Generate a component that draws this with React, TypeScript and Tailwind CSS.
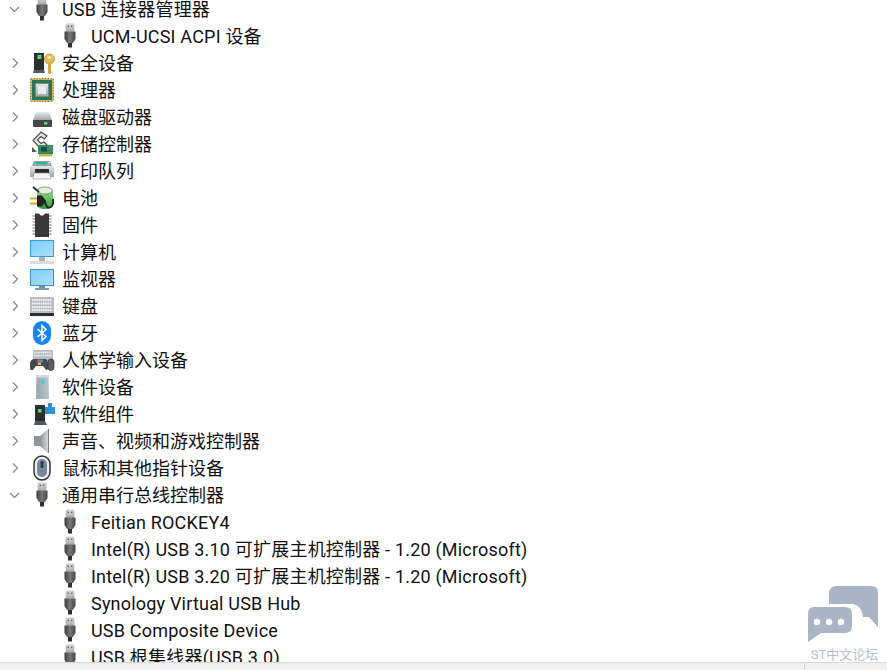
const font = "font-['Roboto','Noto_Sans_CJK_SC',sans-serif]";

function Chevron({ open }: { open?: boolean }) {
  return (
    <svg width="12" height="12" viewBox="0 0 12 12" fill="none" stroke="#808080" strokeWidth="1.1">
      {open ? <path d="M1 4 L5.5 8.5 L10 4" /> : <path d="M4 1.5 L8.5 6 L4 10.5" />}
    </svg>
  );
}

// shared gradients, drawn once at the top of the page
function Defs() {
  return (
    <svg width="0" height="0" className="absolute">
      <defs>
        <linearGradient id="plug" x1="0" x2="1" y1="0" y2="0">
          <stop offset="0" stopColor="#3d3d3d" />
          <stop offset="0.5" stopColor="#787878" />
          <stop offset="1" stopColor="#454545" />
        </linearGradient>
        <linearGradient id="metal" x1="0" x2="0" y1="0" y2="1">
          <stop offset="0" stopColor="#e6e8ea" />
          <stop offset="1" stopColor="#a2a6aa" />
        </linearGradient>
        <linearGradient id="screen" x1="0" x2="1" y1="0" y2="1">
          <stop offset="0" stopColor="#7fcdf8" />
          <stop offset="1" stopColor="#a9e0fc" />
        </linearGradient>
        <linearGradient id="tower" x1="0" x2="1" y1="0" y2="0">
          <stop offset="0" stopColor="#9aa6ae" />
          <stop offset="1" stopColor="#b9c4cb" />
        </linearGradient>
        <linearGradient id="cone" x1="0" x2="1" y1="0" y2="0">
          <stop offset="0" stopColor="#8d9297" />
          <stop offset="1" stopColor="#d5d8da" />
        </linearGradient>
        <linearGradient id="jar" x1="0" x2="0" y1="0" y2="1">
          <stop offset="0" stopColor="#8fd67c" />
          <stop offset="1" stopColor="#2f9c3c" />
        </linearGradient>
      </defs>
    </svg>
  );
}

function Usb() {
  return (
    <svg width="26" height="26" viewBox="0 0 26 26">
      <rect x="9" y="1" width="8" height="7.5" rx="1" fill="url(#metal)" stroke="#9a9a9a" strokeWidth="0.5" />
      <rect x="10.5" y="2.5" width="1.6" height="1.6" fill="#666" />
      <rect x="13.9" y="2.5" width="1.6" height="1.6" fill="#666" />
      <path d="M7.5 8.5 H18.5 V16 L16 20 H10 L7.5 16 Z" fill="url(#plug)" />
      <rect x="11" y="20" width="4" height="4.5" fill="#2f2f2f" />
    </svg>
  );
}

function Security() {
  return (
    <svg width="26" height="26" viewBox="0 0 26 26">
      <rect x="5" y="3" width="10" height="17" fill="#2b2f31" />
      <rect x="8.5" y="5" width="4" height="4" fill="#4be06a" />
      <path d="M5 20 H15 L16 23 H4 Z" fill="#55595c" />
      <circle cx="20.5" cy="9" r="5" fill="#e8bb55" stroke="#b5832a" strokeWidth="0.7" />
      <ellipse cx="20.5" cy="7.5" rx="1.8" ry="1.2" fill="#fff6d8" />
      <path d="M19 13.5 H22 V21 L23 22 L20.5 24.5 L19 23 Z" fill="#d9a63f" />
    </svg>
  );
}

function Cpu() {
  return (
    <svg width="26" height="26" viewBox="0 0 26 26">
      <rect x="1.5" y="1.5" width="23" height="23" fill="#d3b35e" />
      <rect x="3" y="3" width="20" height="20" fill="#2c7455" />
      <path d="M1.5 2 V24 M24.5 2 V24 M2 1.5 H24 M2 24.5 H24" stroke="#8a6f2e" strokeWidth="1" strokeDasharray="1.2 1.6" />
      <rect x="6.5" y="6.5" width="13" height="13" fill="url(#metal)" stroke="#7d8a83" strokeWidth="0.8" />
      <rect x="9" y="9" width="8" height="8" fill="#e9ebe9" />
    </svg>
  );
}

function Disk() {
  return (
    <svg width="26" height="26" viewBox="0 0 26 26">
      <path d="M7 8 H20 L23 16 H4 Z" fill="url(#metal)" />
      <path d="M4 16 H23 V22 Q23 23 22 23 H5 Q4 23 4 22 Z" fill="#464646" />
      <rect x="15" y="18" width="3.5" height="2.5" fill="#5fe06a" />
    </svg>
  );
}

function Storage() {
  return (
    <svg width="26" height="26" viewBox="0 0 26 26">
      <path d="M12 1 L18 5 L15.5 8 L12 5.5 L8.5 9 L12 12.5 L15 11 L18 14 L12 18 L4 9.5 Z" fill="#e4e4e4" stroke="#4d4d4d" strokeWidth="1.2" />
      <path d="M3 16 L8 21 H3 Z" fill="#555" />
      <rect x="9" y="14" width="15" height="9" fill="#2f8a63" />
      <rect x="12" y="16" width="6" height="4.5" fill="#1d4d3a" />
      <rect x="20" y="15.5" width="3" height="2" fill="#e2574c" />
      <path d="M10 23 H23 V25.5 H10 Z" fill="#d6b24d" />
    </svg>
  );
}

function Printer() {
  return (
    <svg width="26" height="26" viewBox="0 0 26 26">
      <path d="M5 3 H21 L23 8 H3 Z" fill="#8fa5a8" />
      <rect x="7" y="4" width="11" height="2" fill="#37b294" />
      <rect x="19.5" y="4" width="1.5" height="1.5" fill="#e9f7f1" />
      <path d="M1 8 H25 V19 H1 Z" fill="url(#metal)" />
      <rect x="6" y="11" width="14" height="5" fill="#2a2a2a" />
      <path d="M5 15 H21 L22 21 H4 Z" fill="#f6f6f6" stroke="#8a8a8a" strokeWidth="0.6" />
    </svg>
  );
}

function Battery() {
  return (
    <svg width="26" height="26" viewBox="0 0 26 26">
      <path d="M8 6 H24 V19 Q24 24 16 24 Q8 24 8 19 Z" fill="url(#jar)" />
      <ellipse cx="16" cy="5.5" rx="7.5" ry="3.5" fill="#e3efdd" stroke="#6d6d6d" strokeWidth="0.7" />
      <path d="M4 2 L10 7" stroke="#2a2a2a" strokeWidth="1.8" />
      <path d="M1 13.5 H9 M1 18.5 H9" stroke="#d9a62e" strokeWidth="2" />
      <path d="M8 10.5 H13 L17 16 L13 21.5 H8 Z" fill="#222" />
      <path d="M16 16 Q17 24.5 22 22 Q25 20 24 14" fill="none" stroke="#222" strokeWidth="1.8" />
    </svg>
  );
}

function Firmware() {
  return (
    <svg width="26" height="26" viewBox="0 0 26 26">
      <path d="M6 1.5 H10 Q13 6 16 1.5 H20 V25 H6 Z" fill="#383838" />
      <path d="M3.5 4 H6 M3.5 7 H6 M3.5 10 H6 M3.5 13 H6 M3.5 16 H6 M3.5 19 H6 M3.5 22 H6 M20 4 H22.5 M20 7 H22.5 M20 10 H22.5 M20 13 H22.5 M20 16 H22.5 M20 19 H22.5 M20 22 H22.5" stroke="#9c9c9c" strokeWidth="1.7" />
    </svg>
  );
}

function Computer() {
  return (
    <svg width="26" height="26" viewBox="0 0 26 26">
      <rect x="1" y="1" width="24" height="17" fill="#3c9be0" />
      <rect x="2" y="2" width="22" height="15" fill="url(#screen)" />
      <rect x="10" y="18" width="6" height="4" fill="#a9b4bd" />
      <rect x="1" y="22" width="24" height="3" fill="#d6dce0" />
    </svg>
  );
}

function Monitor() {
  return (
    <svg width="26" height="26" viewBox="0 0 26 26">
      <rect x="1" y="3" width="24" height="17" fill="#3f8ec9" />
      <rect x="2" y="4" width="22" height="15" fill="url(#screen)" />
      <rect x="10" y="20" width="6" height="2" fill="#7f8b94" />
      <rect x="6" y="22" width="14" height="2" fill="#7a99b0" />
    </svg>
  );
}

function Keyboard() {
  return (
    <svg width="26" height="26" viewBox="0 0 26 26">
      <rect x="1" y="4" width="24" height="16" fill="#b9bdc1" />
      <path d="M3 7 H23 M3 10.5 H23 M3 14 H23 M3 17 H23" stroke="#f4f4f4" strokeWidth="2" strokeDasharray="1.5 0.7" />
      <rect x="1" y="20" width="24" height="3" fill="#2f2f2f" />
    </svg>
  );
}

function Bluetooth() {
  return (
    <svg width="26" height="26" viewBox="0 0 26 26">
      <rect x="4" y="1" width="18" height="24" rx="9" fill="#1685f2" />
      <path d="M8.5 9 L17 16.5 L13 20.5 V5.5 L17 9.5 L8.5 17" fill="none" stroke="#fff" strokeWidth="1.5" />
    </svg>
  );
}

function Hid() {
  return (
    <svg width="26" height="26" viewBox="0 0 26 26">
      <rect x="4" y="3" width="20" height="11" fill="#b9bdc1" />
      <path d="M5 5.5 H23 M5 8.5 H23" stroke="#f2f2f2" strokeWidth="1.6" strokeDasharray="1.5 0.7" />
      <path d="M1 17 Q1 12 6 12 H16 Q19 12 19 17 V22 Q19 23 17 23 L14 19 H7 L4 23 H2 Q1 23 1 21 Z" fill="#464a4e" />
      <rect x="8" y="12.5" width="3" height="3" fill="#e2574c" />
      <rect x="11" y="12.5" width="3" height="3" fill="#3b8ee0" />
      <rect x="9" y="15.5" width="3" height="2.5" fill="#e8b93f" />
      <rect x="19" y="12" width="6" height="11.5" rx="3" fill="#5c6166" stroke="#2f2f2f" strokeWidth="0.7" />
    </svg>
  );
}

function SoftDevice() {
  return (
    <svg width="26" height="26" viewBox="0 0 26 26">
      <path d="M7.5 1 H19.5 L20 25 H7 Z" fill="url(#tower)" />
      <path d="M7.5 1 H19.5 V3.5 H7.5 Z" fill="#d3dbe0" />
      <rect x="12" y="6" width="3.5" height="3.5" fill="#35d3dc" />
    </svg>
  );
}

function SoftComponent() {
  return (
    <svg width="26" height="26" viewBox="0 0 26 26">
      <rect x="6" y="4" width="10" height="16" fill="#2b2f31" />
      <rect x="9" y="8" width="3.5" height="3.5" fill="#4be06a" />
      <path d="M6 20 H16 L18 24 H5 Z" fill="#55595c" />
      <path d="M16 6 H19 V2 H23 V6 H26 V13 H16 Z" fill="#2f90d8" />
    </svg>
  );
}

function Speaker() {
  return (
    <svg width="26" height="26" viewBox="0 0 26 26">
      <rect x="5" y="8" width="6" height="10" fill="#8f959a" />
      <path d="M11 8 L19 1 V25 L11 18 Z" fill="url(#cone)" />
      <path d="M19.5 1 V25" stroke="#787d82" strokeWidth="1" />
    </svg>
  );
}

function Mouse() {
  return (
    <svg width="26" height="26" viewBox="0 0 26 26">
      <rect x="5" y="1" width="16" height="24" rx="8" fill="#eef0f2" stroke="#333" strokeWidth="1.5" />
      <rect x="8" y="4" width="10" height="18" rx="5" fill="#76879f" />
      <rect x="11.5" y="6" width="3" height="7" rx="1.5" fill="#343c49" />
    </svg>
  );
}

type Cat = { label: string; icon: React.ReactNode; open?: boolean; wide?: boolean };

const top: Cat[] = [
  { label: "安全设备", icon: <Security /> },
  { label: "处理器", icon: <Cpu /> },
  { label: "磁盘驱动器", icon: <Disk /> },
  { label: "存储控制器", icon: <Storage /> },
  { label: "打印队列", icon: <Printer /> },
  { label: "电池", icon: <Battery /> },
  { label: "固件", icon: <Firmware /> },
  { label: "计算机", icon: <Computer /> },
  { label: "监视器", icon: <Monitor /> },
  { label: "键盘", icon: <Keyboard /> },
  { label: "蓝牙", icon: <Bluetooth /> },
  { label: "人体学输入设备", icon: <Hid /> },
  { label: "软件设备", icon: <SoftDevice /> },
  { label: "软件组件", icon: <SoftComponent /> },
  { label: "声音、视频和游戏控制器", icon: <Speaker /> },
  { label: "鼠标和其他指针设备", icon: <Mouse /> },
];

const usbDevices = [
  "Feitian ROCKEY4",
  "Intel(R) USB 3.10 可扩展主机控制器 - 1.20 (Microsoft)",
  "Intel(R) USB 3.20 可扩展主机控制器 - 1.20 (Microsoft)",
  "Synology Virtual USB Hub",
  "USB Composite Device",
  "USB 根集线器(USB 3.0)",
];

function CatRow({ label, icon, open, wide }: Cat) {
  return (
    <div className="flex h-[27px] shrink-0 items-center">
      <div className="flex w-[29px] justify-center">
        <Chevron open={open} />
      </div>
      <div className="h-[26px] w-[26px]">{icon}</div>
      <span className={wide ? "ml-[7px] whitespace-nowrap pt-[2px] tracking-[0.2px]" : "ml-[7px] whitespace-nowrap pt-[2px]"}>{label}</span>
    </div>
  );
}

function DeviceRow({ label }: { label: string }) {
  return (
    <div className="flex h-[27px] shrink-0 items-center pl-[57px]">
      <div className="h-[26px] w-[26px]">
        <Usb />
      </div>
      <span className="ml-[8px] whitespace-nowrap pt-[2px] tracking-[0.2px]">{label}</span>
    </div>
  );
}

export default function App() {
  return (
    <div className={`relative flex h-[670px] w-[887px] flex-col overflow-hidden bg-white text-[18px] leading-none text-[#111] ${font}`}>
      <Defs />
      <div className="flex-1 overflow-hidden">
        <div className="-mt-[5px] flex flex-col">
          <CatRow label="USB 连接器管理器" icon={<Usb />} open wide />
          <DeviceRow label="UCM-UCSI ACPI 设备" />
          {top.map((c) => (
            <CatRow key={c.label} {...c} />
          ))}
          <CatRow label="通用串行总线控制器" icon={<Usb />} open />
          {usbDevices.map((d) => (
            <DeviceRow key={d} label={d} />
          ))}
        </div>
      </div>
      <div className="h-[8px] shrink-0 border-t border-[#d9d9d9] bg-[#f0f0f0] pl-[804px]">
        <div className="h-full border-l border-[#d9d9d9]" />
      </div>
      <div className="absolute right-[8px] top-[586px] flex flex-col items-center">
        <svg width="72" height="56" viewBox="0 0 72 56">
          <path d="M30 0 H64 Q71 0 71 7 V38 L71 41 L62 31 H56 Q55 20 46 18 H22 V8 Q22 0 30 0 Z" fill="#a9b5c4" />
          <path d="M7 21 H38 Q45 21 45 28 V40 Q45 47 38 47 H14 L1 56 V28 Q1 21 7 21 Z" fill="#a9b5c4" />
          <circle cx="10" cy="36" r="3.2" fill="#fff" />
          <circle cx="22" cy="36" r="3.2" fill="#fff" />
          <circle cx="34" cy="36" r="3.2" fill="#fff" />
        </svg>
        <span className="ml-[3px] mt-[6px] whitespace-nowrap text-[13px] text-[#b4bfcc]">ST中文论坛</span>
      </div>
    </div>
  );
}
